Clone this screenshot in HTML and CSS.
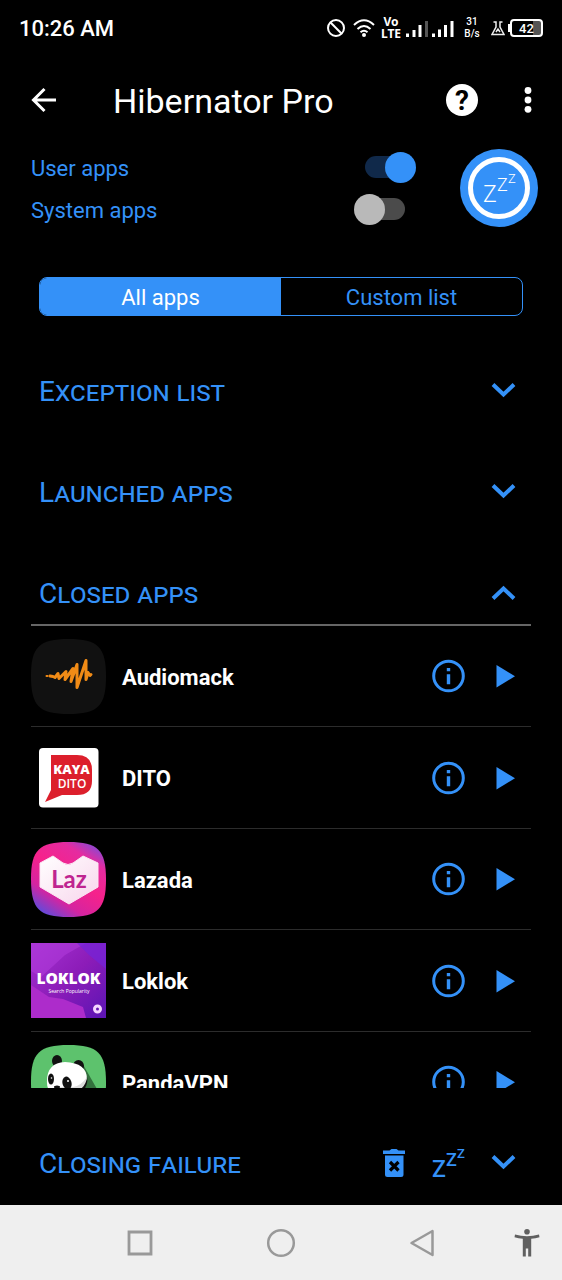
FILE: index.html
```html
<!DOCTYPE html>
<html lang="en">
<head>
<meta charset="utf-8">
<meta name="viewport" content="width=device-width, initial-scale=1">
<title>Hibernator Pro</title>
<link rel="stylesheet" href="styles.css">
</head>
<body>
<svg class="defs" aria-hidden="true">
  <defs>
    <symbol id="chevron" viewBox="0 0 40 40"><path d="M10 12.500l10.500 10 10.500-10" fill="none" stroke="currentColor" stroke-width="4"/></symbol>
    <symbol id="chevron-up" viewBox="0 0 40 40"><path d="M10 24.500l10.500-10 10.500 10" fill="none" stroke="currentColor" stroke-width="4"/></symbol>
    <symbol id="info" viewBox="0 0 40 40"><circle cx="20.500" cy="20" r="14.800" fill="none" stroke="currentColor" stroke-width="3"/><path d="M18.800 12h3.400v3.300h-3.400zM18.800 18.300h3.400v10h-3.400z" fill="currentColor"/></symbol>
    <symbol id="play" viewBox="0 0 40 40"><path d="M11.500 9v22.500l18.500-11.300z" fill="currentColor"/></symbol>
  </defs>
</svg>
<div class="phone">
  <header class="status">
    <time class="clock">10:26 AM</time>
    <div class="signals">
      <svg width="18" height="20" viewBox="0 0 18 20"><g fill="none" stroke="#fff" stroke-width="2"><circle cx="9" cy="10" r="8"/><path d="M3.300 4.300l11.400 11.400"/></g></svg>
      <svg class="wifi" width="22" height="20" viewBox="0 0 22 20"><g fill="none" stroke="#fff" stroke-width="2"><path d="M1 7q10-9.500 20 0M4.500 11q6.500-6 13 0M7.500 14.300q3.500-3 7 0"/></g><circle cx="11" cy="17" r="2" fill="#fff"/></svg>
      <span class="volte"><span>Vo</span><span>LTE</span></span>
      <svg width="22" height="20" viewBox="0 0 22 20"><path d="M0 15.500h3V19H0zM6.500 12h3v7h-3zM12.500 7h3v12h-3z" fill="#fff"/><path d="M19 3h3v16h-3z" fill="#555"/></svg>
      <svg class="signal-two" width="23" height="20" viewBox="0 0 23 20"><path d="M1 15.500h3V19H1zM7 11.500h3V19H7zM13 7h3v12h-3zM19.500 3h3v16h-3z" fill="#fff"/></svg>
      <span class="speed"><span>31</span><span>B/s</span></span>
      <svg class="flask" width="14" height="20" viewBox="0 0 14 20"><path d="M2.500 4H5v5L1 16.500h12L9 9V4h2.500M5 4.500V9M5 14l2-3 2 3" fill="none" stroke="#eee" stroke-width="1.500"/></svg>
      <i class="nub"></i><span class="battery">42</span>
    </div>
  </header>

  <div class="appbar">
    <button class="icon-button" aria-label="Back"><svg width="40" height="40" viewBox="0 0 40 40"><path d="M32 20H10M20.500 9L9.500 20l11 11" fill="none" stroke="#fff" stroke-width="3"/></svg></button>
    <h1>Hibernator Pro</h1>
    <button class="icon-button help" aria-label="Help"><span>?</span></button>
    <button class="icon-button" aria-label="More options"><svg width="40" height="40" viewBox="0 0 40 40"><g fill="#fff"><circle cx="20" cy="10.500" r="3.400"/><circle cx="20" cy="20" r="3.400"/><circle cx="20" cy="29.300" r="3.400"/></g></svg></button>
  </div>

  <main>
    <section class="options">
      <div class="toggles">
        <label><span>User apps</span><input type="checkbox" checked></label>
        <label><span>System apps</span><input type="checkbox"></label>
      </div>
      <button class="sleep" aria-label="Hibernate now"><svg width="78" height="78" viewBox="0 0 78 78"><circle cx="39" cy="39" r="39" fill="#3491f8"/><circle cx="39" cy="39" r="28.500" fill="none" stroke="#fff" stroke-width="5"/><g class="zzz" fill="#fff"><text x="23" y="53" font-size="23">Z</text><text x="37" y="42" font-size="18">Z</text><text x="48" y="34" font-size="13">Z</text></g></svg></button>
    </section>

    <div class="tabs">
      <button class="active">All apps</button>
      <button>Custom list</button>
    </div>

    <button class="section"><span>Exception list</span><svg width="40" height="40"><use href="#chevron"/></svg></button>
    <button class="section"><span>Launched apps</span><svg width="40" height="40"><use href="#chevron"/></svg></button>
    <button class="section open" aria-expanded="true"><span>Closed apps</span><svg width="40" height="40"><use href="#chevron-up"/></svg></button>

    <ul class="apps">
      <li>
        <svg class="logo" viewBox="0 0 75 75"><path d="M0 37C0 8 8 0 37.500 0S75 8 75 37.500 67 75 37.500 75 0 67 0 37z" fill="#111"/><path d="M19 37l3 .5 2 1 3-4 1 5 7-7-1 8 8-11-2 13 6-17 0 23 9-27 0 19 2-7 2 3 1-1" fill="none" stroke="#f18b16" stroke-width="3" stroke-linejoin="round" stroke-linecap="round"/><path d="M15.500 37h1" stroke="#f18b16" stroke-width="2" stroke-linecap="round"/></svg>
        <span class="name">Audiomack</span>
        <button class="icon-button" aria-label="Audiomack info"><svg width="40" height="40"><use href="#info"/></svg></button>
        <button class="icon-button" aria-label="Launch Audiomack"><svg width="40" height="40"><use href="#play"/></svg></button>
      </li>
      <li>
        <svg class="logo" viewBox="0 0 75 75"><rect x="8" y="8" width="59.500" height="59.500" rx="4" fill="#fff"/><path d="M20 15h26q15 0 15 15v11q0 14-15 14H31L14 62l6-12z" fill="#dc1f2c"/><g class="brand" fill="#fff" text-anchor="middle"><text x="40.500" y="34" font-size="13" font-weight="800">KAYA</text><text x="41" y="47.500" font-size="12" font-weight="600">DITO</text></g></svg>
        <span class="name">DITO</span>
        <button class="icon-button" aria-label="DITO info"><svg width="40" height="40"><use href="#info"/></svg></button>
        <button class="icon-button" aria-label="Launch DITO"><svg width="40" height="40"><use href="#play"/></svg></button>
      </li>
      <li>
        <svg class="logo" viewBox="0 0 75 75"><defs><linearGradient id="laz" x1="0.250" y1="1" x2="0.900" y2="0"><stop offset="0" stop-color="#6648d8"/><stop offset=".22" stop-color="#d524a0"/><stop offset=".5" stop-color="#f6228b"/><stop offset=".78" stop-color="#e52ba0"/><stop offset="1" stop-color="#7050e0"/></linearGradient><linearGradient id="heart" x1="0" y1="0" x2="1" y2="1"><stop offset="0" stop-color="#fff"/><stop offset="1" stop-color="#f8d5ec"/></linearGradient></defs><path d="M0 37C0 8 8 0 37.500 0S75 8 75 37.500 67 75 37.500 75 0 67 0 37z" fill="url(#laz)"/><path d="M9 21l13-7 10 7q5 3 10 0l10-7 15 7v24L38 62 9 45z" fill="url(#heart)" stroke="#fbe6f4" stroke-linejoin="round"/><text class="laz" x="38" y="45.500" font-size="24" fill="#bf2490" text-anchor="middle">Laz</text></svg>
        <span class="name">Lazada</span>
        <button class="icon-button" aria-label="Lazada info"><svg width="40" height="40"><use href="#info"/></svg></button>
        <button class="icon-button" aria-label="Launch Lazada"><svg width="40" height="40"><use href="#play"/></svg></button>
      </li>
      <li>
        <svg class="logo" viewBox="0 0 75 75"><defs><linearGradient id="lok" x1="0" y1="0" x2="1" y2="1"><stop offset="0" stop-color="#a532d2"/><stop offset=".5" stop-color="#8c1cb8"/><stop offset="1" stop-color="#5b14b4"/></linearGradient></defs><path d="M0 0h75v75H0z" fill="url(#lok)"/><path d="M0 42l18 12 14 2 20 8 3 11H0z" fill="#ad2ccb"/><path d="M0 0h55L34 12 10 34 0 28z" fill="#b23ddd" opacity=".55"/><path d="M46 0h29v26L58 12z" fill="#7424d8" opacity=".7"/><g class="brand" fill="#fff" text-anchor="middle"><text x="37.500" y="41" font-size="15.500" font-weight="800">LOKLOK</text><text x="38" y="50" font-size="5">Search Popularity</text></g><circle cx="66.500" cy="66" r="3" fill="none" stroke="#f6d5ff" stroke-width="3"/></svg>
        <span class="name">Loklok</span>
        <button class="icon-button" aria-label="Loklok info"><svg width="40" height="40"><use href="#info"/></svg></button>
        <button class="icon-button" aria-label="Launch Loklok"><svg width="40" height="40"><use href="#play"/></svg></button>
      </li>
      <li>
        <svg class="logo" viewBox="0 0 75 75"><path d="M0 37C0 8 8 0 37.500 0S75 8 75 37.500 67 75 37.500 75 0 67 0 37z" fill="#5dc26d"/><path d="M50 16l16 28v20H40z" fill="#33703d"/><g fill="#111"><ellipse cx="26" cy="16" rx="5" ry="6"/><ellipse cx="47.500" cy="21" rx="5.500" ry="6"/></g><path d="M16 38q-1-20 18-21 22 1 22 17 0 13-14 15H24q-8-3-8-11z" fill="#fff"/><path d="M56 32q2 10-7 16l9 16H28V44h14q12-1 14-12z" fill="#111"/><path d="M28 42h14q8-1 14-10-1 11-12 15H26z" fill="#ddd"/><ellipse cx="20" cy="34" rx="3" ry="5.500" fill="#111"/><ellipse cx="36" cy="38" rx="4.500" ry="6.500" fill="#111" transform="rotate(-15 36 38)"/><circle cx="37" cy="36" r="1" fill="#fff"/><circle cx="20.500" cy="33" r=".8" fill="#fff"/><ellipse cx="26" cy="42" rx="3" ry="1.500" fill="#111"/></svg>
        <span class="name">PandaVPN</span>
        <button class="icon-button" aria-label="PandaVPN info"><svg width="40" height="40"><use href="#info"/></svg></button>
        <button class="icon-button" aria-label="Launch PandaVPN"><svg width="40" height="40"><use href="#play"/></svg></button>
      </li>
    </ul>

    <section class="failure">
      <h2>Closing failure</h2>
      <button class="icon-button" aria-label="Clear list"><svg width="40" height="40" viewBox="0 0 40 40"><path d="M8 6.500h6.500l2-1.500h5l2 1.500H30V10H8zM10 11.500h18.500v19q0 2.500-2.500 2.500H12.500q-2.500 0-2.500-2.500z" fill="#3491f8"/><path d="M15 18l8.500 8.500m0-8.500L15 26.500" stroke="#000" stroke-width="3.200"/></svg></button>
      <button class="icon-button" aria-label="Hibernate failed apps"><svg width="40" height="40" viewBox="0 0 40 40"><g class="zzz bold" fill="#3491f8"><text x="3" y="33" font-size="23">Z</text><text x="17" y="22" font-size="18">Z</text><text x="28" y="14" font-size="13">Z</text></g></svg></button>
      <button class="icon-button" aria-label="Expand closing failure"><svg width="40" height="40"><use href="#chevron"/></svg></button>
    </section>
  </main>

  <nav class="sysnav">
    <button aria-label="Recent apps"><svg width="32" height="32" viewBox="0 0 32 32"><path d="M5 5h22v22H5z" fill="none" stroke="#999" stroke-width="2.800"/></svg></button>
    <button aria-label="Home"><svg width="32" height="32" viewBox="0 0 32 32"><circle cx="16" cy="16" r="12.800" fill="none" stroke="#999" stroke-width="2.500"/></svg></button>
    <button aria-label="Back"><svg width="32" height="32" viewBox="0 0 32 32"><path d="M26.500 4v24L5.500 16z" fill="none" stroke="#999" stroke-width="2.500" stroke-linejoin="round"/></svg></button>
    <button class="access" aria-label="Accessibility"><svg width="32" height="32" viewBox="0 0 32 32"><g fill="#606060"><circle cx="16" cy="4.700" r="2.800"/><path d="M4 7.500q12 3.500 24 0l.5 2.700q-4 1.200-8.300 1.600V29.500h-3v-8h-2.400v8h-3V11.800q-4.300-.4-8.300-1.600z"/></g></svg></button>
  </nav>
</div>
</body>
</html>
```

FILE: styles.css
```css
* { box-sizing: border-box; }
body { margin: 0; background: #000; color: #fff; font-family: Roboto, "Liberation Sans", sans-serif; }
button { margin: 0; padding: 0; border: 0; background: none; color: inherit; font: inherit; }
h1, h2 { margin: 0; font-weight: 400; }
svg { display: block; }
.defs { position: absolute; width: 0; height: 0; }

.phone { display: flex; flex-direction: column; height: 100vh; }

.status { display: flex; align-items: center; justify-content: space-between; height: 56px; flex: none; padding: 0 19px; }
.clock { font-size: 22px; font-weight: 500; line-height: 28px; padding-top: 2px; }
.signals { display: flex; align-items: center; }
.wifi { margin: 0 5px 0 8px; }
.volte { display: flex; flex-direction: column; align-items: center; width: 22px; margin-right: 4px; font: 700 12px/12px "Noto Sans", sans-serif; }
.signal-two { margin-left: 3px; }
.speed { display: flex; flex-direction: column; align-items: center; width: 20px; margin: 0 9px 0 8px; font-size: 10px; font-weight: 500; line-height: 12px; }
.nub { width: 2px; height: 8px; margin-left: 3px; background: #fff; }
.battery { display: flex; align-items: center; justify-content: center; width: 33px; height: 18px; border: 2px solid #fff; border-radius: 4px; background: linear-gradient(90deg, #000 72%, #555 72%); font-size: 13px; font-weight: 500; }

.appbar { display: flex; align-items: center; height: 88px; flex: none; padding: 0 14px 0 24px; }
.appbar h1 { flex: 1; padding-left: 49px; font-size: 34px; line-height: 40px; padding-top: 2px; }
.icon-button { display: grid; place-items: center; width: 40px; height: 40px; flex: none; }
.help { margin-right: 26px; }
.help span { width: 32px; height: 32px; border-radius: 50%; background: #fff; color: #000; font-size: 28px; font-weight: 700; line-height: 33px; text-align: center; }

main { display: flex; flex-direction: column; flex: 1; min-height: 0; padding: 2px 31px 0; color: #3491f8; }
.options { display: flex; align-items: center; justify-content: space-between; margin-right: -7px; }
.toggles { flex: 1; }
.toggles label { display: flex; align-items: center; justify-content: space-between; height: 42px; margin-right: 44px; font-size: 22px; }
.toggles span { padding-top: 2px; }
.toggles input { appearance: none; display: grid; align-items: center; width: 62px; height: 31px; margin: 0; }
.toggles input::before, .toggles input::after { content: ""; grid-area: 1 / 1; }
.toggles input::before { width: 40px; height: 22px; border-radius: 11px; background: #4b4b4b; justify-self: center; }
.toggles input::after { width: 31px; height: 31px; border-radius: 50%; background: #b9b9b9; justify-self: start; }
.toggles input:checked::before { background: #10294a; }
.toggles input:checked::after { background: #3491f8; justify-self: end; }
.sleep { border-radius: 50%; }
.zzz { font-family: Roboto, sans-serif; font-weight: 300; }
.zzz.bold { font-weight: 500; }

.options { margin-right: -8px; padding-right: 1px; }
.tabs { display: flex; flex: none; height: 39px; margin: 47px 8px 25px; border: 1px solid #3491f8; border-radius: 8px; overflow: hidden; }
.tabs button { flex: 1; padding-top: 2px; font-size: 22px; }
.tabs .active { background: #3491f8; color: #fff; }

.section { display: flex; align-items: center; justify-content: space-between; flex: none; height: 101px; padding: 0 8px; font-size: 28px; line-height: 32px; font-variant-caps: small-caps; text-align: left; }
.section.open { height: 83px; padding-top: 20px; border-bottom: 2px solid #666; }

.apps { flex: 1; min-height: 0; margin: 0; padding: 0; overflow: hidden; list-style: none; }
.apps li { display: flex; align-items: center; height: 101px; padding-right: 6px; border-bottom: 1px solid #2c2c2c; }
.apps li:nth-child(even) { height: 102px; }
.logo { width: 75px; height: 75px; flex: none; }
.name { flex: 1; padding: 2px 0 0 16px; color: #fff; font-size: 22px; font-weight: 700; }
.apps .icon-button + .icon-button { margin-left: 17px; }
.brand { font-family: "Open Sans", sans-serif; }
.laz { font-family: Lato, sans-serif; font-weight: 700; }

.failure { display: flex; align-items: center; flex: none; gap: 14px; height: 117px; padding: 34px 8px 0; }
.failure h2 { flex: 1; font-size: 28px; line-height: 32px; font-variant-caps: small-caps; }

.sysnav { position: relative; display: grid; grid-template-columns: repeat(3, 1fr); align-items: center; flex: none; height: 75px; padding: 0 70px; background: #efefef; }
.sysnav button { display: grid; place-items: center; }
.sysnav .access { position: absolute; right: 19px; top: 22px; }
```
